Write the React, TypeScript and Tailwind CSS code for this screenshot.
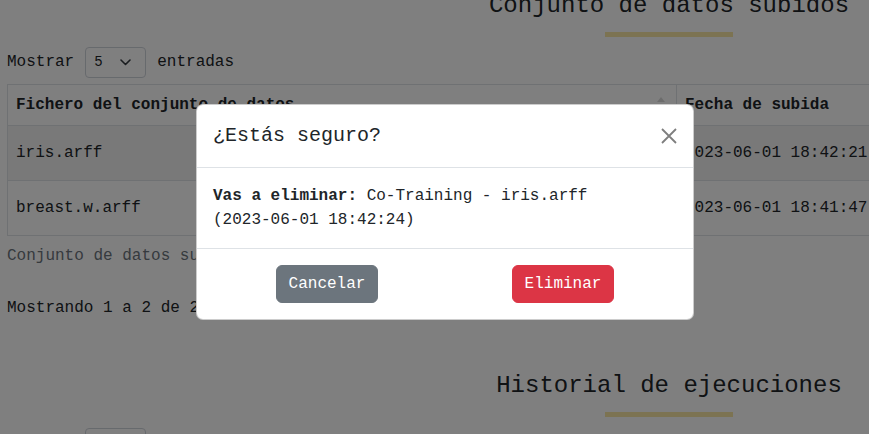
export default function App() {
    const font = { fontFamily: '"Liberation Mono", "Courier New", monospace' };

    return (
        <div className="relative w-[869px] h-[434px] overflow-hidden bg-white text-[#212529]" style={font}>
            {/* Page behind the backdrop */}
            <div className="-mt-2">
                <div className="ml-[470px] w-[398px] flex flex-col items-center">
                    <h2 className="text-[24px] leading-[1.2] font-normal whitespace-nowrap">Conjunto de datos subidos</h2>
                    <div className="mt-[11px] w-[128px] h-[5px] bg-[#f8e6a4]"></div>
                </div>

                <div className="mt-[10px] ml-[7px] flex items-center gap-[11px] text-[16px] leading-6">
                    <span>Mostrar</span>
                    <div className="w-[61px] h-[31px] border border-[#ced4da] rounded-[4px] flex items-center justify-between pl-2 pr-[14px] text-[14px]">
                        <span>5</span>
                        <svg width="11" height="7" viewBox="0 0 11 7" fill="none" stroke="#343a40" strokeWidth="1.6" strokeLinecap="round" strokeLinejoin="round">
                            <path d="M1 1l4.5 4.5L10 1" />
                        </svg>
                    </div>
                    <span>entradas</span>
                </div>

                <table className="mt-[6px] ml-[7px] border-collapse text-[16px] leading-6 w-[1000px] table-fixed">
                    <thead>
                        <tr className="h-[41px]">
                            <th className="w-[669px] border border-[#dee2e6] px-2 text-left font-bold relative">
                                Fichero del conjunto de datos
                                <span className="absolute right-[11px] top-[12px] w-0 h-0 border-l-[4px] border-r-[4px] border-b-[5px] border-l-transparent border-r-transparent border-b-black/15"></span>
                            </th>
                            <th className="w-[331px] border border-[#dee2e6] px-2 text-left font-bold">Fecha de subida</th>
                        </tr>
                    </thead>
                    <tbody>
                        <tr className="h-[55px] bg-black/5">
                            <td className="border border-[#dee2e6] px-2 align-middle">iris.arff</td>
                            <td className="border border-[#dee2e6] px-2 align-middle whitespace-nowrap">2023-06-01 18:42:21</td>
                        </tr>
                        <tr className="h-[55px]">
                            <td className="border border-[#dee2e6] px-2 align-middle">breast.w.arff</td>
                            <td className="border border-[#dee2e6] px-2 align-middle whitespace-nowrap">2023-06-01 18:41:47</td>
                        </tr>
                    </tbody>
                </table>
                <p className="ml-[7px] pt-2 pb-2 text-[16px] leading-6 text-[#6c757d]">Conjunto de datos subidos</p>

                <p className="ml-[7px] mt-5 text-[16px] leading-6">Mostrando 1 a 2 de 2 entradas</p>

                <div className="mt-[52px] ml-[470px] w-[398px] flex flex-col items-center">
                    <h2 className="text-[24px] leading-[1.2] font-normal whitespace-nowrap">Historial de ejecuciones</h2>
                    <div className="mt-[11px] w-[128px] h-[5px] bg-[#f8e6a4]"></div>
                </div>

                <div className="mt-[11px] ml-[7px] flex items-center gap-[11px] text-[16px] leading-6">
                    <span>Mostrar</span>
                    <div className="w-[61px] h-[31px] border border-[#ced4da] rounded-[4px]"></div>
                    <span>entradas</span>
                </div>
            </div>

            {/* Backdrop */}
            <div className="absolute inset-0 bg-black/50"></div>

            {/* Modal */}
            <div className="absolute left-[196px] top-[104px] w-[498px] bg-white border border-black/20 rounded-[7px] text-[#212529]">
                <div className="flex items-center justify-between px-4 py-4 border-b border-[#dee2e6]">
                    <h5 className="text-[20px] leading-[30px] font-normal">¿Estás seguro?</h5>
                    <button className="w-4 h-4 opacity-50">
                        <svg width="16" height="16" viewBox="0 0 16 16" fill="none" stroke="#000" strokeWidth="1.8">
                            <path d="M1 1l14 14M15 1L1 15" />
                        </svg>
                    </button>
                </div>
                <div className="p-4 text-[16px] leading-6">
                    <b className="font-bold">Vas a eliminar:</b> Co-Training - iris.arff <span className="whitespace-nowrap">(2023-06-01 18:42:24)</span>
                </div>
                <div className="flex justify-around items-center p-3 border-t border-[#dee2e6]">
                    <button className="m-1 h-[38px] px-3 border border-[#6c757d] rounded-[6px] bg-[#6c757d] text-white text-[16px] leading-6">Cancelar</button>
                    <button className="m-1 h-[38px] px-3 border border-[#dc3545] rounded-[6px] bg-[#dc3545] text-white text-[16px] leading-6">Eliminar</button>
                </div>
            </div>
        </div>
    );
}
